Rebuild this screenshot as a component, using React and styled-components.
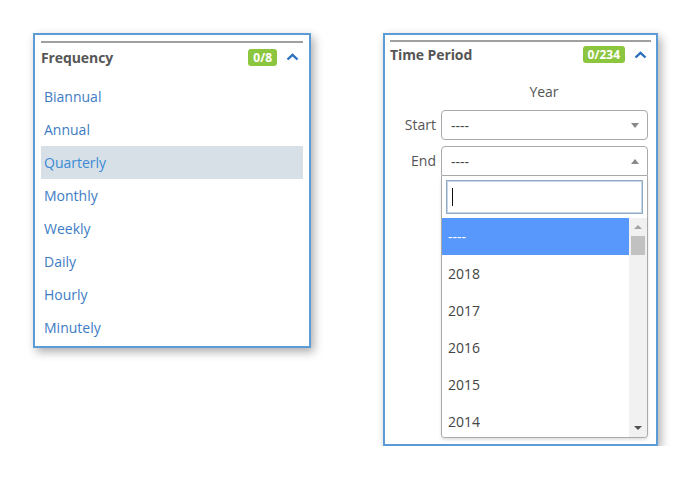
import React from 'react';
import styled, { createGlobalStyle } from 'styled-components';

const Global = createGlobalStyle`
  body {
    margin: 0;
    background: #fff;
    font-family: 'Open Sans', 'Liberation Sans', sans-serif;
  }
`;

const Page = styled.main`
  display: flex;
  align-items: flex-start;
  gap: 72px;
  padding: 33px 0 0 33px;
`;

const Panel = styled.section`
  width: ${(p) => p.w}px;
  height: ${(p) => p.h}px;
  box-sizing: border-box;
  border: 2px solid #5b9bd6;
  background: #fff;
  box-shadow: 3px 4px 9px rgba(0, 0, 0, 0.32);
  padding: ${(p) => p.pt}px ${(p) => p.px}px 0;
`;

const Header = styled.div`
  border-top: 2px solid #a0a0a0;
  height: ${(p) => p.h}px;
  display: flex;
  align-items: center;
  h3 {
    flex: 1;
    margin: 0;
    font-size: 14px;
    font-weight: 700;
    color: #565656;
    letter-spacing: -0.1px;
  }
`;

const Badge = styled.span`
  background: #8cc63f;
  color: #fff;
  font-size: 12px;
  font-weight: 700;
  border-radius: 3px;
  padding: 0 5px;
  height: 17px;
  line-height: 17px;
  margin-right: 9px;
`;

const Chevron = () => (
  <svg width="13" height="8" viewBox="0 0 13 8" style={{ marginRight: 4 }}>
    <polyline points="1.5,6.5 6.5,1.8 11.5,6.5" fill="none" stroke="#2b6fbd" strokeWidth="2.4" />
  </svg>
);

const List = styled.ul`
  list-style: none;
  margin: 9px 0 0;
  padding: 0;
`;

const Item = styled.li`
  height: 33px;
  line-height: 33px;
  padding-left: 3px;
  font-size: 14px;
  color: ${(p) => (p.active ? '#3a8ad6' : '#3d7cc4')};
  background: ${(p) => (p.active ? '#d7e0e6' : 'transparent')};
`;

const Year = styled.div`
  text-align: center;
  font-size: 14px;
  color: #555;
  margin: 15px 0 0 47px;
  height: 20px;
  line-height: 20px;
`;

const Row = styled.div`
  display: flex;
  align-items: flex-start;
  margin-top: ${(p) => p.mt}px;
`;

const Label = styled.label`
  width: 46px;
  text-align: right;
  font-size: 14px;
  color: #555;
  line-height: 30px;
  padding-right: 5px;
  flex-shrink: 0;
`;

const Field = styled.div`
  width: 207px;
`;

const Select = styled.div`
  height: 30px;
  box-sizing: border-box;
  border: 1px solid #aaa;
  border-radius: ${(p) => (p.open ? '4px 4px 0 0' : '4px')};
  display: flex;
  align-items: center;
  padding: 0 8px 0 9px;
  font-size: 14px;
  color: #444;
  span {
    flex: 1;
  }
`;

const Arrow = styled.i`
  width: 0;
  height: 0;
  border-left: 4px solid transparent;
  border-right: 4px solid transparent;
  ${(p) => (p.up ? 'border-bottom: 5px solid #888;' : 'border-top: 5px solid #888;')}
`;

const Dropdown = styled.div`
  height: 262px;
  box-sizing: border-box;
  border: 1px solid #aaa;
  border-top: none;
  border-radius: 0 0 4px 4px;
  box-shadow: 0 2px 3px rgba(0, 0, 0, 0.12);
  display: flex;
  flex-direction: column;
  overflow: hidden;
`;

const Search = styled.div`
  margin: 4px 4px 0;
  height: 34px;
  box-sizing: border-box;
  border: 1px solid #90aac8;
  box-shadow: inset 0 0 0 1px #c6d4e4;
  display: flex;
  align-items: center;
  padding-left: 5px;
  &::before {
    content: '';
    width: 1px;
    height: 18px;
    background: #111;
  }
`;

const Results = styled.div`
  flex: 1;
  display: flex;
  margin-top: 4px;
  overflow: hidden;
`;

const Options = styled.div`
  flex: 1;
`;

const Option = styled.div`
  height: 37px;
  line-height: 37px;
  padding-left: 6px;
  font-size: 14px;
  color: ${(p) => (p.active ? '#fff' : '#444')};
  background: ${(p) => (p.active ? '#5897fb' : '#fff')};
`;

const Scrollbar = styled.div`
  width: 18px;
  background: #f1f1f1;
  display: flex;
  flex-direction: column;
  align-items: center;
`;

const Thumb = styled.div`
  width: 14px;
  height: 19px;
  background: #c1c1c1;
`;

const ScrollArrow = styled.i`
  width: 0;
  height: 0;
  border-left: 4px solid transparent;
  border-right: 4px solid transparent;
  ${(p) => (p.up ? 'border-bottom: 4px solid #a3a3a3;' : 'border-top: 4px solid #505050;')}
  margin: ${(p) => (p.up ? '7px 0 7px' : 'auto 0 7px')};
`;

const frequencies = ['Biannual', 'Annual', 'Quarterly', 'Monthly', 'Weekly', 'Daily', 'Hourly', 'Minutely'];
const years = ['----', '2018', '2017', '2016', '2015', '2014'];

export default function App() {
  return (
    <>
      <Global />
      <Page>
        <Panel w={278} h={315} pt={6} px={6}>
          <Header h={28}>
            <h3>Frequency</h3>
            <Badge>0/8</Badge>
            <Chevron />
          </Header>
          <List>
            {frequencies.map((f) => (
              <Item key={f} active={f === 'Quarterly'}>
                {f}
              </Item>
            ))}
          </List>
        </Panel>

        <Panel w={275} h={413} pt={5} px={5}>
          <Header h={25}>
            <h3>Time Period</h3>
            <Badge>0/234</Badge>
            <Chevron />
          </Header>
          <Year>Year</Year>
          <Row mt={8}>
            <Label>Start</Label>
            <Field>
              <Select>
                <span>----</span>
                <Arrow />
              </Select>
            </Field>
          </Row>
          <Row mt={6}>
            <Label>End</Label>
            <Field>
              <Select open>
                <span>----</span>
                <Arrow up />
              </Select>
              <Dropdown>
                <Search />
                <Results>
                  <Options>
                    {years.map((y, i) => (
                      <Option key={y} active={i === 0}>
                        {y}
                      </Option>
                    ))}
                  </Options>
                  <Scrollbar>
                    <ScrollArrow up />
                    <Thumb />
                    <ScrollArrow />
                  </Scrollbar>
                </Results>
              </Dropdown>
            </Field>
          </Row>
        </Panel>
      </Page>
    </>
  );
}
